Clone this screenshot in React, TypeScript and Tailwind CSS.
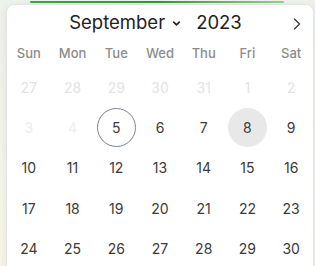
import { ChevronDown, ChevronRight } from 'lucide-react';

const WEEKDAYS = ['Sun', 'Mon', 'Tue', 'Wed', 'Thu', 'Fri', 'Sat'];

type Day = { n: number; muted?: boolean; faint?: boolean; today?: boolean; selected?: boolean };

const WEEKS: Day[][] = [
  [27, 28, 29, 30, 31, 1, 2].map((n) => ({ n, muted: true })),
  [
    { n: 3, faint: true },
    { n: 4, faint: true },
    { n: 5, today: true },
    { n: 6 },
    { n: 7 },
    { n: 8, selected: true },
    { n: 9 },
  ],
  [10, 11, 12, 13, 14, 15, 16].map((n) => ({ n })),
  [17, 18, 19, 20, 21, 22, 23].map((n) => ({ n })),
  [24, 25, 26, 27, 28, 29, 30].map((n) => ({ n })),
];

export default function App() {
  return (
    <div
      className="relative w-[315px] h-[266px] overflow-hidden bg-gradient-to-b from-[#eef2ec] to-[#f8f6ea]"
      style={{ fontFamily: 'Inter, "Noto Sans", sans-serif' }}
    >
      <div className="absolute left-[30px] top-[1px] w-[254px] h-[2px] rounded-full bg-gradient-to-r from-[#3aa83a] via-[#2a9a2a] to-[#8fd08f]" />
      <div className="ml-[6px] mt-[4px] w-[308px] h-[270px] bg-white rounded-lg border border-[#e4e4e4] shadow-[0_2px_8px_rgba(0,0,0,0.08)]">
        <div className="relative flex items-center justify-center h-[35px]">
          <div className="flex items-center pr-[9px] text-[18.5px] text-[#222]">
            <span>September</span>
            <ChevronDown className="w-[11px] h-[11px] ml-[6px] mt-[1px]" strokeWidth={3.5} />
            <span className="ml-[14px]">2023</span>
          </div>
          <ChevronRight className="absolute right-[6px] top-[9px] w-[20px] h-[20px] text-[#333]" strokeWidth={1.4} />
        </div>
        <div className="grid grid-cols-7 h-[27px] items-center text-[13px] font-medium text-[#8c8c8c]">
          {WEEKDAYS.map((d) => (
            <div key={d} className="text-center">{d}</div>
          ))}
        </div>
        <div>
          {WEEKS.map((w, i) => (
            <div key={i} className="grid grid-cols-7 h-[40.3px]">
              {w.map((d, j) => (
                <div key={j} className="flex items-center justify-center">
                  <div
                    className={
                      'flex items-center justify-center w-[39px] h-[39px] rounded-full text-[14px] ' +
                      (d.muted
                        ? 'text-[#e3e3e3]'
                        : d.faint
                        ? 'text-[#eeeeee]'
                        : d.selected
                        ? 'bg-[#e8e8e8] text-[#3a3a3a]'
                        : d.today
                        ? 'border border-[#7c8595] text-[#3a3a3a]'
                        : 'text-[#3a3a3a]')
                    }
                  >
                    {d.n}
                  </div>
                </div>
              ))}
            </div>
          ))}
        </div>
      </div>
    </div>
  );
}
